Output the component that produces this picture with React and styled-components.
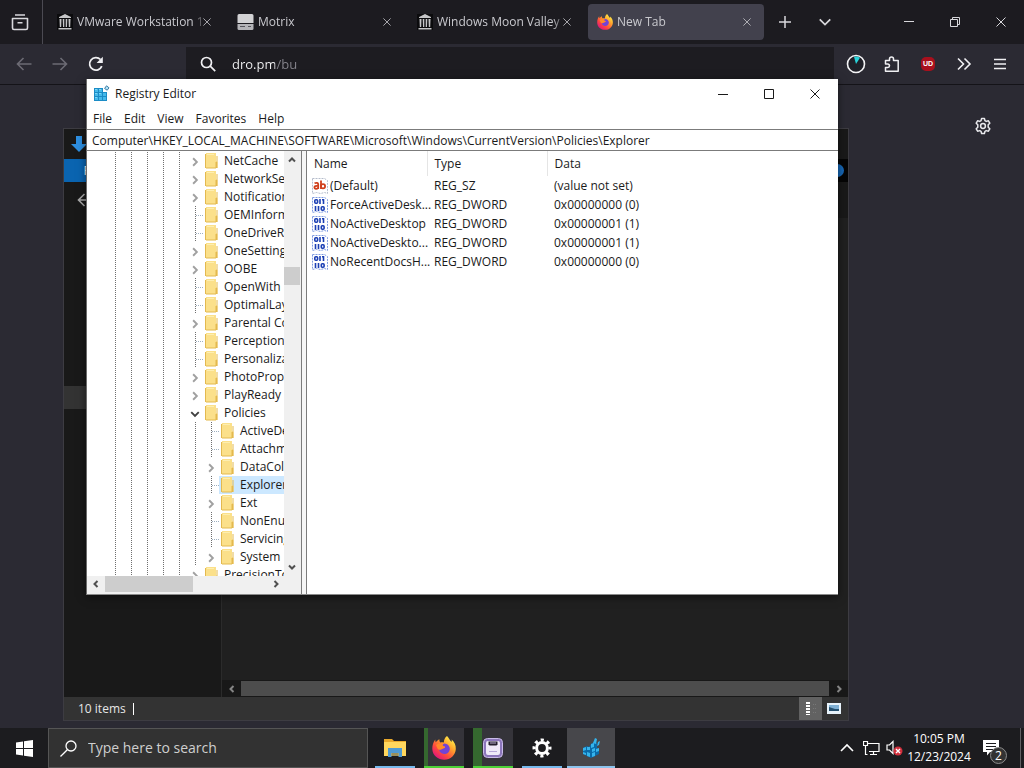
import React from 'react';
import styled, { createGlobalStyle, css } from 'styled-components';

const GlobalStyle = createGlobalStyle`
  * {
    box-sizing: border-box;
  }
  body {
    margin: 0;
    background: #2b2a33;
    font: 12px/18px "Open Sans", "Noto Sans", sans-serif;
  }
  button {
    display: flex;
    align-items: center;
    justify-content: center;
    padding: 0;
    border: 0;
    background: none;
    color: inherit;
    font: inherit;
  }
  input {
    min-width: 0;
    padding: 0;
    border: 0;
    outline: none;
    background: none;
    color: inherit;
    font: inherit;
  }
  svg {
    display: block;
    flex: none;
  }
`;

const Screen = styled.div`
  display: flex;
  flex-direction: column;
  height: 100vh;
  overflow: hidden;
`;

const Desktop = styled.main`
  position: relative;
  flex: 1;
  min-height: 0;
`;

/* ---------- icons ---------- */

const Stroke = ({ size = 16, box = 16, width = 1, children, ...rest }) => (
  <svg
    width={size}
    height={size}
    viewBox={`0 0 ${box} ${box}`}
    fill="none"
    stroke="currentColor"
    strokeWidth={width}
    {...rest}
  >
    {children}
  </svg>
);

const Cross = ({ size = 10, width = 1 }) => (
  <Stroke size={size} box={10} width={width}>
    <path d="M.5.5l9 9M9.5.5l-9 9" />
  </Stroke>
);

const Chevron = ({ dir = 'down', size = 8, width = 2 }) => {
  const turn = { down: 0, left: 90, up: 180, right: 270 }[dir];
  return (
    <Stroke size={size} box={8} width={width}>
      <path d="M1 2.5l3 3 3-3" transform={`rotate(${turn} 4 4)`} />
    </Stroke>
  );
};

const ArchiveBoxIcon = () => (
  <Stroke size={18} box={18} width={1.6} strokeLinejoin="round">
    <path d="M4 2h10M1.5 5.5h15V15a1.5 1.5 0 0 1-1.5 1.5H3A1.5 1.5 0 0 1 1.5 15zM6.5 9.8h5" />
  </Stroke>
);

const MuseumIcon = () => (
  <svg width="16" height="16" viewBox="0 0 16 16">
    <rect width="16" height="16" fill="#0b0b0d" />
    <path
      fill="#c6c6c8"
      d="M8 0l6 3v1H2V3zM2.5 5h2l-.3 8H2.8zM5.7 5h1.6v8H6zM8.7 5h1.6L10 13H8.7zM11.5 5h2l-.3 8h-1.4zM1.5 14h13v1.5h-13z"
    />
  </svg>
);

const DriveIcon = () => (
  <svg width="17" height="16" viewBox="0 0 17 16">
    <path fill="#d2d2d4" d="M2 0h13a1.5 1.5 0 0 1 1.5 1.5V9H.5V1.5A1.5 1.5 0 0 1 2 0z" />
    <path fill="#b4b4b8" d="M.5 10h16v4.5A1.5 1.5 0 0 1 15 16H2a1.5 1.5 0 0 1-1.5-1.5z" />
    <path stroke="#55555c" d="M3 12.5h5M11 12.5h3" />
  </svg>
);

const FirefoxIcon = ({ size = 16, id }) => (
  <svg width={size} height={size} viewBox="0 0 24 24">
    <defs>
      <linearGradient id={id} x1=".85" y1=".1" x2=".2" y2=".9">
        <stop offset="0" stopColor="#fff04a" />
        <stop offset=".35" stopColor="#ffa22c" />
        <stop offset=".7" stopColor="#ff4a3d" />
        <stop offset="1" stopColor="#e21a78" />
      </linearGradient>
    </defs>
    <path
      fill={`url(#${id})`}
      d="M15 0c2 2 2.500 4 4.500 6 .4-.9.3-1.600.1-2.400C22.500 6 24 9.500 23.800 13 23.500 19 18.500 23.800 12.300 23.800S.5 19.500.3 13C.2 9 1.400 6 3.300 3.500c0 1.300.1 2 .5 2.700C5 4.800 6 4 7.400 3.200c-.1 1.400.2 2.400.8 3.200 1.300-.3 2.500-.2 3.700.2C11.800 4 12.800 1.600 15 0z"
    />
    <path
      fill="#7343d6"
      d="M12.300 7.500c3.300.2 5.700 2.700 5.500 5.800-.3 3-2.700 4.900-5.600 4.700-2.900-.1-5-2.200-5.100-4.900 1.200.6 2.500.5 3.700-.3l2.100-1.100c.4-.5.2-1-.4-1.100l-2.600-.3c.3-1.300 1.200-2.200 2.400-2.800z"
    />
    <path fill="#ff8a2a" d="M4 9c2-1.700 4.500-1.700 6.200-.5l1.200 1.700c.8 0 1.500.3 1.500.8-.3 1-1.600 1.300-2.800 1.800-1.300 1.500-3.600 1.300-4.600-.2z" />
  </svg>
);

const ArrowIcon = ({ flip }) => (
  <Stroke size={16} width={1.6} transform={flip ? 'scale(-1 1)' : undefined}>
    <path d="M15.5 8H1.5M7.5 2L1.5 8l6 6" />
  </Stroke>
);

const ReloadIcon = () => (
  <Stroke width={1.8}>
    <path d="M13.8 10.2A6.3 6.3 0 1 1 12.5 3.5" />
    <path d="M14.8.8v6.2H8.6z" fill="currentColor" stroke="none" />
  </Stroke>
);

const SearchIcon = () => (
  <Stroke width={1.7}>
    <circle cx="6.5" cy="6.5" r="5" />
    <path d="M10.2 10.2l5 5" />
  </Stroke>
);

const DialIcon = () => (
  <svg width="20" height="20" viewBox="0 0 20 20">
    <circle cx="10" cy="10" r="8.5" fill="#202028" stroke="#f4f4f6" strokeWidth="1.6" />
    <path fill="#29d3da" d="M10 10L8 2.800a7.500 7.500 0 0 1 6 1z" />
  </svg>
);

const PuzzleIcon = () => (
  <Stroke width={1.5} strokeLinejoin="round">
    <path d="M1.5 15.2V11.5h2.3a1.7 1.7 0 0 0 0-3.4H1.5V4.5h4V3a2 2 0 0 1 4 0v1.5h4.7v10.7z" />
  </Stroke>
);

const ShieldBadge = styled.span`
  display: flex;
  align-items: center;
  justify-content: center;
  width: 14px;
  height: 14px;
  border-radius: 5px;
  background: #a8101d;
  color: #fff;
  font: bold 7px/14px "Liberation Sans", sans-serif;
`;

const MoreIcon = () => (
  <Stroke width={1.6}>
    <path d="M2 2.5L7.5 8 2 13.500M8.500 2.500L14 8l-5.500 5.500" />
  </Stroke>
);

const MenuIcon = () => (
  <Stroke width={1.5}>
    <path d="M2 3.5h12M2 8h12M2 12.5h12" />
  </Stroke>
);

const HexGearIcon = () => (
  <Stroke size={18} box={18} width={1.5} strokeLinejoin="round">
    <path d="M7.600 1.500h2.800l.6 2.200 1.200.7 2.200-.6 1.400 2.400-1.600 1.600v2.400l1.600 1.600-1.400 2.400-2.200-.6-1.200.7-.6 2.200H7.600L7 14.300l-1.200-.7-2.200.6-1.400-2.400 1.600-1.600V7.800L2.200 6.200l1.400-2.400 2.200.6L7 3.700z" />
    <circle cx="9" cy="9" r="2.4" />
  </Stroke>
);

const CogIcon = () => (
  <svg width="20" height="20" viewBox="0 0 20 20" fill="none" stroke="#fff">
    <circle cx="10" cy="10" r="5.4" strokeWidth="3" />
    <circle cx="10" cy="10" r="8" strokeWidth="3" strokeDasharray="3.14 3.143" strokeDashoffset="1.57" />
  </svg>
);

const RegistryIcon = () => (
  <svg width="17" height="17" viewBox="0 0 17 17">
    <path fill="#1b8cc6" d="M1 3h9v4h4v9H1z" />
    <path fill="#45b9ea" d="M2 4h3v3H2zM6 4h3v3H6zM2 8h3v3H2zM6 8h3v3H6zM10 8h3v3h-3zM2 12h3v3H2zM6 12h3v3H6zM10 12h3v3h-3z" />
    <path fill="#7fd6f7" d="M2 4h2v1H2zM6 4h2v1H6zM2 8h2v1H2zM6 8h2v1H6zM2 12h2v1H2z" />
    <path fill="#b5e4f8" stroke="#3f7ea6" d="M13.5.8l2.500 2-1.800 2.400-2.600-1.700z" />
  </svg>
);

const RegistryTaskIcon = () => (
  <svg width="20" height="22" viewBox="0 0 20 22">
    <path fill="#0a6aa8" d="M2 11l4-2 2 1 2-3 3-2 3 1v5l2 1v5l-8 4-8-4z" />
    <path fill="#35b4ec" d="M2 11l3-1v3l-3 1zM6 10h3v3H6zM2 15l3 1v2l-3-1zM6 15l3 1v4l-3-1zM10 7l3-1v4l-3 1zM11 12l3-1v3l-3 1zM11 16l3-1v4l-3 1zM15 12l3-1v3l-3 1zM14 1l2 1-1 5-3-1zM17 5l2-1-1 4-2 1z" />
  </svg>
);

const FolderIcon = () => (
  <svg width="13" height="16" viewBox="0 0 13 16">
    <path fill="#fbe08a" d="M1 0h10v8l1.500 1v6H1z" />
    <path fill="#e3b94f" d="M0 1h1v14H0zM1 14.500h10v1H1zM10.500 9h1v6h-1zM11.500 3h1v12h-1z" />
    <path fill="#fdeeb0" d="M2 1h7v1H2z" />
  </svg>
);

const ValueIcon = ({ binary }) => (
  <svg width="16" height="16" viewBox="0 0 16 16">
    <path
      fill="#fff"
      stroke={binary ? '#7f9be0' : '#b5bccb'}
      strokeDasharray="2 1"
      d="M.5.5h12l3 2v13l-3-1-4 1-4-1-4 1z"
    />
    {binary ? (
      <g fill="none" stroke="#1b3fb4" strokeWidth="1.6">
        <rect x="2.8" y="2.8" width="2.8" height="3.4" rx="1" />
        <path d="M8 2v5M10 2.800h1.500V7M3.500 9v5M6.500 9v5" />
        <rect x="9.3" y="9.8" width="2.8" height="3.4" rx="1" />
      </g>
    ) : (
      <g fill="none" stroke="#d0401c" strokeWidth="1.8">
        <path d="M2.5 5.300c2-1 3.700-.4 3.700 1V11M6.200 8c-2.500-.3-3.800.3-3.800 1.400C2.400 11 4.700 11.300 6.200 9.800M9 2.500V11" />
        <circle cx="11" cy="8.2" r="2.1" />
      </g>
    )}
  </svg>
);

const WindowsLogo = () => (
  <svg width="17" height="17" viewBox="0 0 17 17" fill="#fff">
    <path d="M0 2.5l7-1V8H0zM8 1.300L17 0v8H8zM0 9h7v6.500l-7-1zM8 9h9v8l-9-1.300z" />
  </svg>
);

const ExplorerIcon = () => (
  <svg width="22" height="20" viewBox="0 0 22 20">
    <path fill="#e9a92c" d="M0 1h8l2 2h12v4H0z" />
    <path fill="#ffd75e" d="M0 4h22v14H0z" />
    <path fill="#4f9ad2" d="M4 10h14v9h-3.500v-4h-7v4H4z" />
    <path fill="#9a8f5a" d="M7.500 15h7v3h-7z" />
  </svg>
);

const ScaleIcon = () => (
  <svg width="20" height="20" viewBox="0 0 20 20">
    <rect x=".5" y=".5" width="19" height="19" rx="4" fill="#8c76bb" stroke="#c9bbe9" />
    <rect x="3" y="3" width="14" height="14" rx="2" fill="#efeaf8" />
    <path fill="#25202e" d="M5.500 3.500h9v3l-1 1h-7l-1-1z" />
    <path stroke="#b9b0cc" d="M8 4v2M10 4v2M12 4v2" />
    <path stroke="#b6a6d8" d="M6 13.500h8" />
  </svg>
);

/* ---------- browser ---------- */

const TabStrip = styled.header`
  display: flex;
  align-items: center;
  height: 44px;
  background: #1c1b20;
  color: #d8d8dc;
`;

const ViewButton = styled.button`
  width: 43px;
  height: 44px;
  padding-right: 2px;
  border-right: 1px solid #4b4a52;
`;

const Tabs = styled.nav`
  display: flex;
  gap: 4px;
  margin-left: 5px;
  color: #c9c9ce;
`;

const Tab = styled.div`
  display: flex;
  align-items: center;
  width: 176px;
  height: 36px;
  padding: 0 13px 0 9px;
  border-radius: 4px;
  background: ${props => (props.$active ? '#42414d' : 'transparent')};
`;

const TabTitle = styled.button`
  flex: 1;
  justify-content: flex-start;
  min-width: 0;
  padding-left: 4px;
  overflow: hidden;
  white-space: nowrap;
  mask-image: linear-gradient(90deg, #000 92%, rgba(0, 0, 0, 0.2));
`;

const IconButton = styled.button`
  width: ${props => props.$width || 36}px;
  height: ${props => props.$height || 36}px;
  color: ${props => props.$color || 'inherit'};
`;

const Spacer = styled.div`
  flex: 1;
`;

const Toolbar = styled.div`
  display: flex;
  align-items: center;
  height: 41px;
  padding: 0 6px;
  border-bottom: 1px solid #141318;
  background: #2b2a33;
  color: #f0f0f3;
`;

const UrlBar = styled.label`
  display: flex;
  align-items: center;
  flex: 1;
  gap: 16px;
  height: 34px;
  margin: 0 4px 0 72px;
  padding: 0 14px;
  background: #1d1c21;
`;

const UrlInput = styled.input`
  flex: 1;
  font-size: 13px;
  line-height: 20px;
  background: linear-gradient(90deg, #f6f6f8 43px, #86858d 43px);
  background-clip: text;
  -webkit-text-fill-color: transparent;
`;

const PageSettings = styled.div`
  display: flex;
  justify-content: flex-end;
  padding: 23px;
  color: #e8e8ec;
`;

const tabs = [
  { title: 'VMware Workstation 1', icon: <MuseumIcon /> },
  { title: 'Motrix', icon: <DriveIcon /> },
  { title: 'Windows Moon Valley', icon: <MuseumIcon /> },
  { title: 'New Tab', icon: <FirefoxIcon id="fox-tab" />, active: true }
];

const Browser = () => (
  <>
    <TabStrip>
      <ViewButton aria-label="Recent browsing">
        <ArchiveBoxIcon />
      </ViewButton>
      <Tabs>
        {tabs.map(tab => (
          <Tab key={tab.title} $active={tab.active}>
            {tab.icon}
            <TabTitle>{tab.title}</TabTitle>
            <IconButton aria-label="Close tab" $width={8} $height={24}>
              <Cross size={8} />
            </IconButton>
          </Tab>
        ))}
      </Tabs>
      <IconButton aria-label="New tab" $width={42}>
        <Stroke size={12} box={12} width={1.5}>
          <path d="M6 0v12M0 6h12" />
        </Stroke>
      </IconButton>
      <IconButton aria-label="List all tabs" $width={38}>
        <Chevron size={14} width={1} />
      </IconButton>
      <Spacer />
      <IconButton aria-label="Minimize" $width={46}>
        <Stroke size={10} box={10}>
          <path d="M0 4.5h10" />
        </Stroke>
      </IconButton>
      <IconButton aria-label="Restore" $width={46}>
        <Stroke size={10} box={10}>
          <path d="M.5 2.5h7v7h-7zM2.5 2.5v-2h7v7h-2" />
        </Stroke>
      </IconButton>
      <IconButton aria-label="Close" $width={46}>
        <Cross />
      </IconButton>
    </TabStrip>
    <Toolbar>
      <IconButton aria-label="Back" $color="#6c6b74">
        <ArrowIcon />
      </IconButton>
      <IconButton aria-label="Forward" $color="#6c6b74">
        <ArrowIcon flip />
      </IconButton>
      <IconButton aria-label="Reload">
        <ReloadIcon />
      </IconButton>
      <UrlBar>
        <SearchIcon />
        <UrlInput aria-label="Address" defaultValue="dro.pm/bu" />
      </UrlBar>
      <IconButton aria-label="Timer">
        <DialIcon />
      </IconButton>
      <IconButton aria-label="Extensions">
        <PuzzleIcon />
      </IconButton>
      <IconButton aria-label="Blocker">
        <ShieldBadge>UD</ShieldBadge>
      </IconButton>
      <IconButton aria-label="More tools">
        <MoreIcon />
      </IconButton>
      <IconButton aria-label="Menu">
        <MenuIcon />
      </IconButton>
    </Toolbar>
    <PageSettings>
      <IconButton aria-label="Personalize">
        <HexGearIcon />
      </IconButton>
    </PageSettings>
  </>
);

/* ---------- file explorer behind the editor ---------- */

const ExplorerWindow = styled.section`
  position: absolute;
  top: 128px;
  right: 175px;
  bottom: 7px;
  left: 63px;
  display: flex;
  flex-direction: column;
  border: 1px solid #3d3c42;
  background: #191919;
  color: #e6e6e6;
`;

const ExplorerTitle = styled.div`
  display: flex;
  align-items: center;
  height: 30px;
  padding-left: 6px;
`;

const Ribbon = styled.div`
  display: flex;
  align-items: center;
  justify-content: space-between;
  height: 23px;
`;

const FileMenu = styled.button`
  width: 58px;
  height: 23px;
  background: #0a64b0;
  color: #fff;
`;

const HelpBall = styled.span`
  display: flex;
  justify-content: flex-end;
  width: 28px;
  padding: 5px 4px;
  background: #050505;

  &::after {
    content: '';
    width: 13px;
    height: 13px;
    border-radius: 50%;
    background: #1767b5;
  }
`;

const ExplorerNav = styled.div`
  display: flex;
  align-items: center;
  height: 36px;
  padding-left: 13px;
  color: #a8a8a8;
`;

const ExplorerBody = styled.div`
  display: flex;
  flex: 1;
  min-height: 0;
`;

const Places = styled.div`
  width: 158px;
  padding-top: 168px;
  border-right: 1px solid #2b2b2b;
`;

const SelectedPlace = styled.div`
  height: 23px;
  background: #333;
`;

const Files = styled.div`
  display: flex;
  flex: 1;
  flex-direction: column;
  justify-content: flex-end;
  background: #202020;
`;

const DarkScroll = styled.div`
  display: flex;
  height: 17px;
  background: #181818;
  color: #858585;
`;

const DarkThumb = styled.div`
  flex: 1;
  margin: 1px 0;
  background: #4d4d4d;
`;

const StatusBar = styled.footer`
  display: flex;
  align-items: center;
  height: 23px;
  padding-left: 14px;
  background: #333;
`;

const StatusMark = styled.span`
  width: 1px;
  height: 12px;
  margin-left: 7px;
  background: #fff;
`;

const ViewMode = styled.button`
  width: 23px;
  height: 23px;
  margin-right: ${props => (props.$on ? 0 : 3)}px;
  background: ${props => (props.$on ? '#626262' : 'none')};
`;

const Explorer = () => (
  <ExplorerWindow>
    <ExplorerTitle>
      <svg width="18" height="18" viewBox="0 0 18 18">
        <path fill="#2e8fe0" d="M6 1h6v8h5l-8 8-8-8h5z" />
      </svg>
    </ExplorerTitle>
    <Ribbon>
      <FileMenu>File</FileMenu>
      <HelpBall />
    </Ribbon>
    <ExplorerNav>
      <ArrowIcon />
    </ExplorerNav>
    <ExplorerBody>
      <Places>
        <SelectedPlace />
      </Places>
      <Files>
        <DarkScroll>
          <IconButton aria-label="Scroll left" $width={19} $height={17}>
            <Chevron dir="left" />
          </IconButton>
          <DarkThumb />
          <IconButton aria-label="Scroll right" $width={19} $height={17}>
            <Chevron dir="right" />
          </IconButton>
        </DarkScroll>
      </Files>
    </ExplorerBody>
    <StatusBar>
      10 items
      <StatusMark />
      <Spacer />
      <ViewMode aria-label="Details" $on>
        <svg width="12" height="14" viewBox="0 0 12 14">
          <path stroke="#fff" strokeWidth="4" strokeDasharray="2 1" d="M3 0v13" />
          <path stroke="#787878" strokeDasharray="1 1" d="M8 2.500h4M8 6.500h4M8 10.500h4" />
        </svg>
      </ViewMode>
      <ViewMode aria-label="Large icons">
        <svg width="14" height="11" viewBox="0 0 14 11">
          <path fill="#e8f3fb" d="M0 0h14v11H0z" />
          <path fill="#7fb0d4" d="M2 2h10v6H2z" />
          <path fill="#24506f" d="M2 4l3 1 3 1h4v2H2z" />
        </svg>
      </ViewMode>
    </StatusBar>
  </ExplorerWindow>
);

/* ---------- registry editor ---------- */

const EditorWindow = styled.section`
  position: absolute;
  top: 79px;
  right: 186px;
  bottom: 133px;
  left: 86px;
  display: flex;
  flex-direction: column;
  border-bottom: 1px solid #8a8a8a;
  border-left: 1px solid #6b6b6b;
  background: #fff;
  color: #1a1a1a;
  box-shadow: 0 2px 8px rgba(0, 0, 0, 0.5);
`;

const TitleBar = styled.header`
  display: flex;
  align-items: center;
  gap: 5px;
  height: 29px;
  padding-left: 6px;
`;

const WindowButtons = styled.div`
  display: flex;
`;

const MenuBar = styled.nav`
  display: flex;
  gap: 12px;
  height: 21px;
  padding-left: 6px;
`;

const KeyPath = styled.input`
  height: 22px;
  padding: 0 5px;
  border: solid #7b7b7b;
  border-width: 1px 0;
`;

const Panes = styled.div`
  display: flex;
  flex: 1;
  min-height: 0;
`;

const TreePane = styled.div`
  display: flex;
  flex-direction: column;
  width: 215px;
  border-right: 1px solid #7b7b7b;
  background: #f0f0f0;
`;

const TreeArea = styled.div`
  display: flex;
  flex: 1;
  min-height: 0;
`;

const Tree = styled.ul`
  flex: 1;
  min-width: 0;
  margin: 0;
  padding: 1px 0 0 20px;
  overflow: hidden;
  list-style: none;
  background: #fff;
`;

const dots = 'repeating-linear-gradient(#6f6f6f 0 1px, transparent 1px 2px)';

const Guide = styled.span`
  flex: none;
  width: 16px;
  height: 18px;
  background: ${dots} 8px 0 / 1px 100% no-repeat;
`;

const Branch = styled(Guide)`
  background: ${dots} 8px 0 / 1px 100% no-repeat,
    repeating-linear-gradient(90deg, #9fb0c0 0 1px, transparent 1px 2px) 9px 9px / 7px 1px no-repeat;
`;

const Expander = styled.button`
  flex: none;
  width: 16px;
  height: 18px;
  padding-top: 1px;
  color: ${props => (props.$open ? '#404040' : '#a0a0a0')};
`;

const TreeRow = styled.li`
  display: flex;
  height: 18px;
  white-space: nowrap;
`;

const KeyLabel = styled.span`
  display: flex;
  flex: 1;
  align-items: center;
  gap: 6px;
  padding-left: 2px;
  ${props =>
    props.$selected &&
    css`
      background: #cce8ff;
    `}
`;

const ScrollColumn = styled.div`
  display: flex;
  flex-direction: column;
  width: 17px;
`;

const ScrollRow = styled.div`
  display: flex;
  height: 18px;
  padding-bottom: 2px;
`;

const Thumb = styled.div`
  width: ${props => props.$width}px;
  height: ${props => props.$height}px;
  background: #cdcdcd;
`;

const ColumnGap = styled.div`
  flex: none;
  height: 98px;
`;

const Splitter = styled.div`
  width: 5px;
  border-right: 1px solid #7b7b7b;
  background: #f5f5f5;
`;

const ValueTable = styled.table`
  width: 360px;
  height: max-content;
  table-layout: fixed;
  border-collapse: collapse;

  th {
    height: 25px;
    padding: 0 7px;
    border-right: 1px solid #e5e5e5;
    font-weight: 400;
    text-align: left;
  }
  th:last-child {
    border-right: 0;
  }
  td {
    height: 19px;
    padding: 0 0 0 7px;
    white-space: nowrap;
  }
  td:first-child {
    padding: 0 0 0 5px;
  }
`;

const ValueName = styled.div`
  display: flex;
  align-items: center;
  gap: 2px;
`;

const menus = ['File', 'Edit', 'View', 'Favorites', 'Help'];

const keys = [
  { name: 'NetCache', kids: true },
  { name: 'NetworkSer', kids: true },
  { name: 'Notification', kids: true },
  { name: 'OEMInform' },
  { name: 'OneDriveRa' },
  { name: 'OneSetting', kids: true },
  { name: 'OOBE', kids: true },
  { name: 'OpenWith' },
  { name: 'OptimalLay' },
  { name: 'Parental Co', kids: true },
  { name: 'PerceptionS' },
  { name: 'Personaliza' },
  { name: 'PhotoPrope', kids: true },
  { name: 'PlayReady', kids: true },
  { name: 'Policies', kids: true, open: true },
  { name: 'ActiveDe', child: true },
  { name: 'Attachm', child: true },
  { name: 'DataCol', child: true, kids: true },
  { name: 'Explorer', child: true, selected: true },
  { name: 'Ext', child: true, kids: true },
  { name: 'NonEnu', child: true },
  { name: 'Servicing', child: true },
  { name: 'System', child: true, kids: true },
  { name: 'PrecisionTo', kids: true }
];

const values = [
  ['(Default)', 'REG_SZ', '(value not set)'],
  ['ForceActiveDesk...', 'REG_DWORD', '0x00000000 (0)'],
  ['NoActiveDesktop', 'REG_DWORD', '0x00000001 (1)'],
  ['NoActiveDeskto...', 'REG_DWORD', '0x00000001 (1)'],
  ['NoRecentDocsH...', 'REG_DWORD', '0x00000000 (0)']
];

const TreeKey = ({ name, kids, open, child, selected }) => (
  <TreeRow>
    {[1, 2, 3, 4, 5].map(level => (
      <Guide key={level} />
    ))}
    {child && <Guide />}
    {kids ? (
      <Expander aria-label={`Toggle ${name}`} $open={open}>
        <Chevron dir={open ? 'down' : 'right'} size={10} width={1.5} />
      </Expander>
    ) : (
      <Branch />
    )}
    <KeyLabel $selected={selected}>
      <FolderIcon />
      {name}
    </KeyLabel>
  </TreeRow>
);

const RegistryEditor = () => (
  <EditorWindow>
    <TitleBar>
      <RegistryIcon />
      Registry Editor
      <Spacer />
      <WindowButtons>
        <IconButton aria-label="Minimize" $width={46} $height={29}>
          <Stroke size={10} box={10}>
            <path d="M0 5.5h10" />
          </Stroke>
        </IconButton>
        <IconButton aria-label="Maximize" $width={46} $height={29}>
          <Stroke size={10} box={10}>
            <path d="M.5.5h9v9h-9z" />
          </Stroke>
        </IconButton>
        <IconButton aria-label="Close" $width={46} $height={29}>
          <Cross />
        </IconButton>
      </WindowButtons>
    </TitleBar>
    <MenuBar>
      {menus.map(menu => (
        <button key={menu}>{menu}</button>
      ))}
    </MenuBar>
    <KeyPath
      aria-label="Key path"
      defaultValue="Computer\HKEY_LOCAL_MACHINE\SOFTWARE\Microsoft\Windows\CurrentVersion\Policies\Explorer"
    />
    <Panes>
      <TreePane>
        <TreeArea>
          <Tree>
            {keys.map(key => (
              <TreeKey key={key.name} {...key} />
            ))}
          </Tree>
          <ScrollColumn>
            <IconButton aria-label="Scroll up" $width={15} $height={18} $color="#505050">
              <Chevron dir="up" />
            </IconButton>
            <ColumnGap />
            <Thumb $width={16} $height={18} />
            <Spacer />
            <IconButton aria-label="Scroll down" $width={15} $height={18} $color="#505050">
              <Chevron />
            </IconButton>
          </ScrollColumn>
        </TreeArea>
        <ScrollRow>
          <IconButton aria-label="Scroll left" $width={18} $height={16} $color="#505050">
            <Chevron dir="left" />
          </IconButton>
          <Thumb $width={88} $height={16} />
          <Spacer />
          <IconButton aria-label="Scroll right" $width={17} $height={16} $color="#505050">
            <Chevron dir="right" />
          </IconButton>
          <IconButton as="span" $width={17} $height={16} />
        </ScrollRow>
      </TreePane>
      <Splitter />
      <ValueTable>
        <thead>
          <tr>
            <th>Name</th>
            <th>Type</th>
            <th>Data</th>
          </tr>
        </thead>
        <tbody>
          {values.map(([name, type, data]) => (
            <tr key={name}>
              <td>
                <ValueName>
                  <ValueIcon binary={type === 'REG_DWORD'} />
                  {name}
                </ValueName>
              </td>
              <td>{type}</td>
              <td>{data}</td>
            </tr>
          ))}
        </tbody>
      </ValueTable>
    </Panes>
  </EditorWindow>
);

/* ---------- taskbar ---------- */

const Taskbar = styled.footer`
  display: flex;
  height: 40px;
  background: #1c1c1f;
  color: #fff;
`;

const SearchBox = styled.label`
  display: flex;
  align-items: center;
  gap: 11px;
  width: 320px;
  padding: 0 11px;
  border: 1px solid #555;
  background: #323232;

  input {
    flex: 1;
    font-size: 14px;
    line-height: 20px;
  }
  input::placeholder {
    color: #cfcfcf;
    opacity: 1;
  }
`;

const Apps = styled.div`
  display: flex;
  gap: 1px;
  margin-left: 3px;
`;

const TaskButton = styled.button`
  width: 48px;
  height: 40px;
  background: linear-gradient(
      ${props => props.$line},
      ${props => props.$line}
    )
    center bottom / ${props => (props.$focused ? 48 : 40)}px 2px no-repeat
    ${props => (props.$focused ? '#47474b' : 'transparent')};
  ${props =>
    props.$progress &&
    css`
      background: linear-gradient(${props.$line}, ${props.$line}) center bottom / 40px 2px no-repeat,
        linear-gradient(90deg, #35682f ${props.$progress}px, #35343a ${props.$progress}px) center / 40px
          100% no-repeat;
    `}
`;

const Tray = styled.div`
  display: flex;
  align-items: center;
`;

const Clock = styled.button`
  flex-direction: column;
  width: 66px;
`;

const Notices = styled.button`
  position: relative;
  width: 48px;
  height: 40px;
  padding-right: 10px;
`;

const NoticeBadge = styled.span`
  position: absolute;
  right: 13px;
  bottom: 4px;
  width: 17px;
  height: 17px;
  border: 1px solid #8c8c8c;
  border-radius: 50%;
  background: #333;
  line-height: 15px;
`;

const ShowDesktop = styled.button`
  width: 4px;
  height: 40px;
  border-left: 1px solid #606063;
`;

const DesktopTaskbar = () => (
  <Taskbar>
    <IconButton aria-label="Start" $width={48} $height={40}>
      <WindowsLogo />
    </IconButton>
    <SearchBox>
      <Stroke size={17} box={17} width={1.3}>
        <circle cx="11" cy="6" r="5" />
        <path d="M7.3 9.700L.5 16.500" />
      </Stroke>
      <input aria-label="Search" placeholder="Type here to search" />
    </SearchBox>
    <Apps>
      <TaskButton aria-label="File Explorer" $line="#76b9ed">
        <ExplorerIcon />
      </TaskButton>
      <TaskButton aria-label="Firefox" $line="#4cd137" $progress={4}>
        <FirefoxIcon size={24} id="fox-task" />
      </TaskButton>
      <TaskButton aria-label="Scale" $line="#4cd137" $progress={9}>
        <ScaleIcon />
      </TaskButton>
      <TaskButton aria-label="Settings" $line="#76b9ed">
        <CogIcon />
      </TaskButton>
      <TaskButton aria-label="Registry Editor" $line="#8cc4ee" $focused>
        <RegistryTaskIcon />
      </TaskButton>
    </Apps>
    <Spacer />
    <Tray>
      <IconButton aria-label="Hidden icons" $width={24}>
        <Chevron dir="up" size={16} width={0.8} />
      </IconButton>
      <IconButton aria-label="Network" $width={24}>
        <Stroke size={17} box={17} width={1.2}>
          <path d="M5 3.5h11v8H6M10.5 11.500v3M7 14.500h7M.5 1.500h4v4h-4zM2.500 5.500v9h2" />
        </Stroke>
      </IconButton>
      <IconButton aria-label="Volume muted" $width={23}>
        <svg width="17" height="16" viewBox="0 0 17 16">
          <path fill="none" stroke="#fff" strokeWidth="1.2" d="M1 5h2.500L7 1.500v12L3.500 10H1z" />
          <circle cx="12" cy="11" r="4.5" fill="#d3303d" />
          <path stroke="#fff" strokeWidth="1.4" d="M10 9l4 4M14 9l-4 4" />
        </svg>
      </IconButton>
      <Clock>
        <span>10:05 PM</span>
        <span>12/23/2024</span>
      </Clock>
      <Notices aria-label="Notifications">
        <svg width="16" height="16" viewBox="0 0 16 16">
          <path fill="#fff" d="M0 0h16v12H7l-3 3.500V12H0z" />
          <path stroke="#1c1c1f" strokeWidth="1.2" d="M3 3.500h10M3 6.500h10M3 9.500h7" />
        </svg>
        <NoticeBadge>2</NoticeBadge>
      </Notices>
      <ShowDesktop aria-label="Show desktop" />
    </Tray>
  </Taskbar>
);

const App = () => (
  <Screen>
    <GlobalStyle />
    <Desktop>
      <Browser />
      <Explorer />
      <RegistryEditor />
    </Desktop>
    <DesktopTaskbar />
  </Screen>
);

export default App;
